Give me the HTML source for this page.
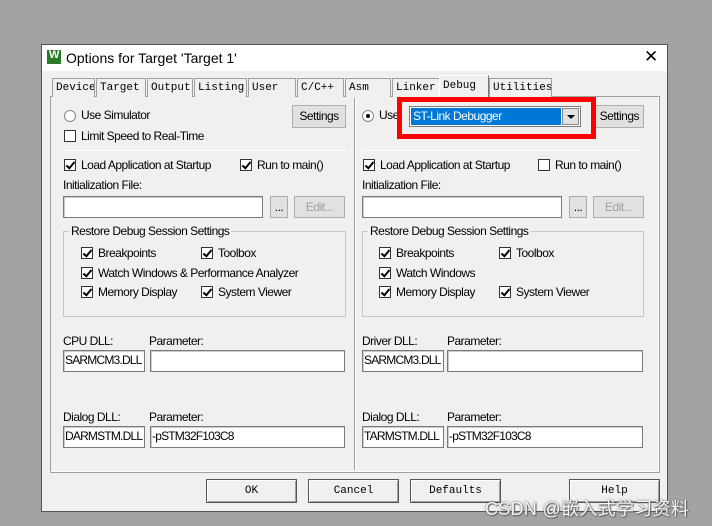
<!DOCTYPE html>
<html><head><meta charset="utf-8"><style>
*{margin:0;padding:0;box-sizing:border-box}
body{width:712px;height:526px;background:#a3a3a3;position:relative;overflow:hidden;font-family:"Liberation Sans",sans-serif;font-size:12px;color:#000;letter-spacing:-0.5px}
.a{position:absolute}
.dlg{left:41px;top:44px;width:627px;height:468px;background:#f0f0f0;border:1px solid #555}
.title{left:42px;top:45px;width:625px;height:26px;background:#fff}
.tab{position:absolute;top:78px;height:19px;background:#f0f0f0;border:1px solid #a0a0a0;border-bottom:none;font-family:"Liberation Mono",monospace;font-size:11px;letter-spacing:0;padding:3px 0 0 3px;overflow:hidden;white-space:nowrap}
.panel{left:50px;top:96px;width:610px;height:377px;border:1px solid #a0a0a0;background:#f0f0f0;box-shadow:inset -1px -1px 0 #fff}
.btn{position:absolute;background:#e1e1e1;border:1px solid #adadad;text-align:center}
.cb{position:absolute;width:12px;height:12px;border:1px solid #333;background:#fff}
.cb.k::after{content:"";position:absolute;left:3px;top:0px;width:3px;height:7px;border:solid #000;border-width:0 2px 2px 0;transform:rotate(40deg)}
.rd{position:absolute;width:12px;height:12px;border:1px solid #888;border-radius:50%;background:#fff}
.rd.k::after{content:"";position:absolute;left:3px;top:3px;width:4px;height:4px;border-radius:50%;background:#000}
.tb{position:absolute;height:22px;background:#fff;border:1px solid #7a7a7a;box-shadow:inset 1px 1px 0 #ccc;padding:2px 1px;white-space:nowrap;overflow:hidden;letter-spacing:-0.8px}
.grp{position:absolute;border:1px solid #c8c8c8}
.t{position:absolute;white-space:nowrap}
.bb{position:absolute;height:24px;background:#f0f0f0;border:1px solid #555;box-shadow:inset 1px 1px 0 #fff,inset -1px -1px 0 #a0a0a0;font-family:"Liberation Mono",monospace;font-size:11px;letter-spacing:0;text-align:center;line-height:22px}
</style></head><body>
<div class="a dlg"></div>
<div class="a title"></div>
<div class="a" style="left:47px;top:50px;width:14px;height:14px;background:#2a7a2a"><span style="color:#fff;font-size:11px;position:absolute;left:2px;top:-1px;font-weight:bold">W</span></div>
<div class="t" style="left:66px;top:50px;font-size:14px;letter-spacing:0">Options for Target 'Target 1'</div>
<div class="t" style="left:644px;top:47px;font-size:17px;letter-spacing:0">✕</div>

<div class="a panel"></div>
<div class="tab" style="left:52px;width:43px">Device</div>
<div class="tab" style="left:96px;width:50px">Target</div>
<div class="tab" style="left:147px;width:46px">Output</div>
<div class="tab" style="left:194px;width:53px">Listing</div>
<div class="tab" style="left:248px;width:48px">User</div>
<div class="tab" style="left:297px;width:47px">C/C++</div>
<div class="tab" style="left:345px;width:46px">Asm</div>
<div class="tab" style="left:392px;width:48px">Linker</div>
<div class="tab" style="left:439px;top:75px;width:50px;height:22px;border-color:#fff #777 #777 #fff;background:#f0f0f0;padding-top:4px">Debug</div>
<div class="tab" style="left:489px;width:63px">Utilities</div>
<div class="a" style="left:440px;top:96px;width:48px;height:2px;background:#f0f0f0"></div>

<div class="a" style="left:354px;top:98px;width:1px;height:372px;background:#a0a0a0"></div>
<div class="a" style="left:355px;top:98px;width:1px;height:372px;background:#fff"></div>

<!-- LEFT -->
<div class="rd" style="left:64px;top:110px"></div><div class="t" style="left:81px;top:108px">Use Simulator</div>
<div class="btn" style="left:292px;top:105px;width:54px;height:23px;line-height:21px">Settings</div>
<div class="cb" style="left:64px;top:130px"></div><div class="t" style="left:81px;top:129px">Limit Speed to Real-Time</div>
<div class="a" style="left:63px;top:150px;width:283px;height:1px;background:#a0a0a0;border-bottom:1px solid #fff"></div>
<div class="cb k" style="left:64px;top:159px"></div><div class="t" style="left:81px;top:158px">Load Application at Startup</div>
<div class="cb k" style="left:240px;top:159px"></div><div class="t" style="left:257px;top:158px">Run to main()</div>
<div class="t" style="left:63px;top:178px">Initialization File:</div>
<div class="tb" style="left:63px;top:196px;width:200px"></div>
<div class="btn" style="left:270px;top:196px;width:18px;height:22px;line-height:20px">...</div>
<div class="btn" style="left:294px;top:196px;width:51px;height:22px;line-height:20px;color:#a0a0a0">Edit...</div>
<div class="grp" style="left:63px;top:231px;width:283px;height:86px"></div>
<div class="t" style="left:69px;top:224px;background:#f0f0f0;padding:0 2px">Restore Debug Session Settings</div>
<div class="cb k" style="left:81px;top:247px"></div><div class="t" style="left:98px;top:246px">Breakpoints</div>
<div class="cb k" style="left:201px;top:247px"></div><div class="t" style="left:218px;top:246px">Toolbox</div>
<div class="cb k" style="left:81px;top:267px"></div><div class="t" style="left:98px;top:266px">Watch Windows &amp; Performance Analyzer</div>
<div class="cb k" style="left:81px;top:286px"></div><div class="t" style="left:98px;top:285px">Memory Display</div>
<div class="cb k" style="left:201px;top:286px"></div><div class="t" style="left:218px;top:285px">System Viewer</div>
<div class="t" style="left:63px;top:334px">CPU DLL:</div><div class="t" style="left:149px;top:334px">Parameter:</div>
<div class="tb" style="left:63px;top:350px;width:82px">SARMCM3.DLL</div>
<div class="tb" style="left:150px;top:350px;width:195px"></div>
<div class="t" style="left:63px;top:410px">Dialog DLL:</div><div class="t" style="left:149px;top:410px">Parameter:</div>
<div class="tb" style="left:63px;top:426px;width:82px">DARMSTM.DLL</div>
<div class="tb" style="left:150px;top:426px;width:195px">-pSTM32F103C8</div>

<!-- RIGHT -->
<div class="rd k" style="left:362px;top:110px"></div><div class="t" style="left:379px;top:108px">Use</div>
<div class="a" style="left:397px;top:97px;width:199px;height:42px;border:5px solid #f00"></div>
<div class="a" style="left:409px;top:106px;width:172px;height:21px;background:#fff;border:1px solid #7a7a7a"></div>
<div class="a" style="left:411px;top:108px;width:150px;height:17px;background:#0078d7;color:#fff;padding:1px 2px">ST-Link Debugger</div>
<div class="a" style="left:562px;top:108px;width:17px;height:17px;background:#e1e1e1;border:1px solid #888"><div style="position:absolute;left:4px;top:6px;border:4px solid transparent;border-top:4px solid #000;border-bottom:none"></div></div>
<div class="btn" style="left:596px;top:105px;width:48px;height:23px;line-height:21px;border-left:none;text-align:right;padding-right:4px">Settings</div>
<div class="a" style="left:362px;top:150px;width:282px;height:1px;background:#a0a0a0;border-bottom:1px solid #fff"></div>
<div class="cb k" style="left:363px;top:159px"></div><div class="t" style="left:380px;top:158px">Load Application at Startup</div>
<div class="cb" style="left:538px;top:159px"></div><div class="t" style="left:555px;top:158px">Run to main()</div>
<div class="t" style="left:362px;top:178px">Initialization File:</div>
<div class="tb" style="left:362px;top:196px;width:200px"></div>
<div class="btn" style="left:569px;top:196px;width:18px;height:22px;line-height:20px">...</div>
<div class="btn" style="left:593px;top:196px;width:51px;height:22px;line-height:20px;color:#a0a0a0">Edit...</div>
<div class="grp" style="left:362px;top:231px;width:282px;height:86px"></div>
<div class="t" style="left:368px;top:224px;background:#f0f0f0;padding:0 2px">Restore Debug Session Settings</div>
<div class="cb k" style="left:379px;top:247px"></div><div class="t" style="left:396px;top:246px">Breakpoints</div>
<div class="cb k" style="left:499px;top:247px"></div><div class="t" style="left:516px;top:246px">Toolbox</div>
<div class="cb k" style="left:379px;top:267px"></div><div class="t" style="left:396px;top:266px">Watch Windows</div>
<div class="cb k" style="left:379px;top:286px"></div><div class="t" style="left:396px;top:285px">Memory Display</div>
<div class="cb k" style="left:499px;top:286px"></div><div class="t" style="left:516px;top:285px">System Viewer</div>
<div class="t" style="left:362px;top:334px">Driver DLL:</div><div class="t" style="left:447px;top:334px">Parameter:</div>
<div class="tb" style="left:362px;top:350px;width:82px">SARMCM3.DLL</div>
<div class="tb" style="left:447px;top:350px;width:196px"></div>
<div class="t" style="left:362px;top:410px">Dialog DLL:</div><div class="t" style="left:447px;top:410px">Parameter:</div>
<div class="tb" style="left:362px;top:426px;width:82px">TARMSTM.DLL</div>
<div class="tb" style="left:447px;top:426px;width:196px">-pSTM32F103C8</div>

<!-- bottom -->
<div class="bb" style="left:206px;top:479px;width:91px">OK</div>
<div class="bb" style="left:308px;top:479px;width:91px">Cancel</div>
<div class="bb" style="left:410px;top:479px;width:91px">Defaults</div>
<div class="bb" style="left:569px;top:479px;width:91px">Help</div>
<div class="t" style="left:485px;top:495px;font-size:18px;color:#f4f4f4;letter-spacing:0.3px;text-shadow:0 0 2px #555,1px 1px 1px #666;font-family:'Liberation Sans','Noto Sans CJK SC',sans-serif">CSDN @嵌入式学习资料</div>
</body></html>
